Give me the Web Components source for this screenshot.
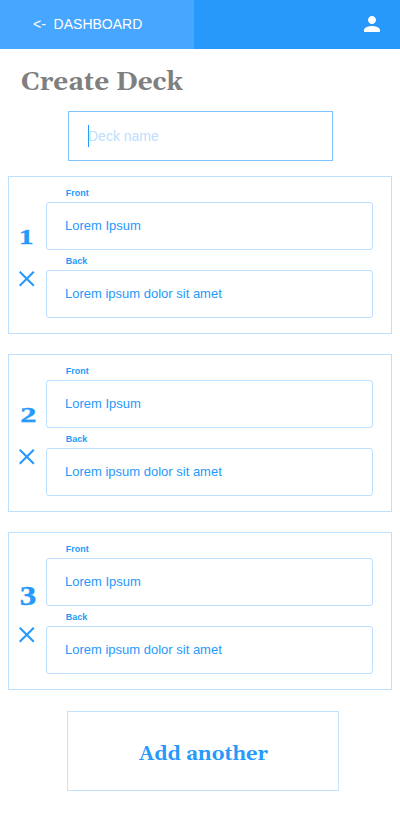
<!DOCTYPE html>
<html lang="en"><head><meta charset="utf-8"><title>Create Deck</title>
<style>
html,body{margin:0;background:#fff}
body{font-family:"Liberation Sans",Arial,sans-serif;color:#2699fb}
</style></head><body>
<deck-page></deck-page>
<script>
class Base extends HTMLElement{
  constructor(){super();this.attachShadow({mode:'open'})}
  connectedCallback(){this.shadowRoot.innerHTML=this.render()}
}
/* Serif lettering fitted to a given width; attributes: text, size, length, x, y, w, h */
customElements.define('serif-text',class extends Base{
  render(){const a=n=>this.getAttribute(n);return `<style>:host{display:block;flex:none}svg{display:block}
  text{font-family:Georgia,Gelasio,"Liberation Serif",serif;font-weight:700;fill:currentColor}
  .num{font-family:"Liberation Serif","Times New Roman",serif;stroke:currentColor;stroke-width:.4}</style>
  <svg width="${a('w')}" height="${a('h')}"><text class="${a('kind')||''}" x="${a('x')||0}" y="${a('y')}" font-size="${a('size')}" textLength="${a('length')}" lengthAdjust="spacingAndGlyphs">${a('text')}</text></svg>`}
});
customElements.define('app-header',class extends Base{
  render(){return `<style>:host{display:flex;height:49px;background:#2699fb;color:#fff;justify-content:space-between}
  .back{box-sizing:border-box;width:194px;height:49px;padding-left:33px;background:#47a6ff;font-size:14px;line-height:48px;white-space:pre}
  svg{width:24px;height:24px;margin:12px 16px 0 0}</style>
  <div class="back"><slot></slot></div>
  <svg viewBox="0 0 24 24" fill="currentColor"><path d="M12 12c2.21 0 4-1.79 4-4s-1.79-4-4-4-4 1.79-4 4 1.79 4 4 4zm0 2c-2.67 0-8 1.34-8 4v2h16v-2c0-2.66-5.33-4-8-4z"/></svg>`}
});
customElements.define('name-input',class extends Base{
  render(){return `<style>:host{box-sizing:border-box;display:flex;align-items:center;width:265px;height:50px;margin-left:68px;border:1px solid #7ec3fc;padding-left:19px;font-size:14px;color:#bce0fd}
  i{width:1px;height:22px;margin-right:-1px;background:#2699fb;flex:none;margin-bottom:1px}</style><i></i><slot></slot>`}
});
customElements.define('text-field',class extends Base{
  render(){return `<style>:host{display:block}
  .label{height:20px;padding-left:19.7px;font:bold 9px/22px "Liberation Sans",Arial,sans-serif}
  .box{box-sizing:border-box;height:48px;border:1px solid #bce0fd;border-radius:3px;padding-left:18px;font-size:13px;line-height:46px}</style>
  <div class="label">${this.getAttribute('label')}</div><div class="box"><slot></slot></div>`}
});
/* size, width, x and baseline of each number */
const digits={1:[20.8,14.5,10,62],2:[20.8,16.2,11.2,62],3:[28,16.5,10.7,66.5]};
customElements.define('deck-card',class extends Base{
  render(){const n=this.getAttribute('n'),[s,l,x,b]=digits[n];return `<style>:host{box-sizing:border-box;display:flex;height:158px;margin:0 8px 20px;border:1px solid #bce0fd;padding:5px 18px 0 0}
  aside{width:37px;flex:none}main{flex:1}
  .x{display:block;width:16px;height:16px;margin:9px 0 0 10px}</style>
  <aside><serif-text kind="num" text="${n}" size="${s}" length="${l}" x="${x}" y="${b}" w="37" h="80"></serif-text>
  <svg class="x" viewBox="0 0 16 16" fill="none" stroke="currentColor" stroke-width="2.1"><path d="M.7 .7L14.8 14.8M14.8 .7L.7 14.8"/></svg></aside>
  <main><text-field label="Front">Lorem Ipsum</text-field><text-field label="Back">Lorem ipsum dolor sit amet</text-field></main>`}
});
customElements.define('add-button',class extends Base{
  render(){return `<style>:host{box-sizing:border-box;display:flex;width:272px;height:80px;margin:21px 0 0 67px;border:1px solid #c2e3fd}</style>
  <serif-text text="Add another" size="19.5" length="129" x="71" y="48" w="270" h="78"></serif-text>`}
});
customElements.define('deck-page',class extends Base{
  render(){return `<style>:host{display:flow-root;height:816px}
  .title{color:#7f7f7f;padding-left:21px;height:62px}
  .cards{margin-top:15px}deck-card:last-child{margin-bottom:0}</style>
  <app-header>&lt;-  DASHBOARD</app-header>
  <div class="title"><serif-text text="Create Deck" size="25.5" length="162" y="41" w="180" h="62"></serif-text></div>
  <name-input>Deck name</name-input>
  <div class="cards"><deck-card n="1"></deck-card><deck-card n="2"></deck-card><deck-card n="3"></deck-card></div>
  <add-button></add-button>`}
});
</script></body></html>
